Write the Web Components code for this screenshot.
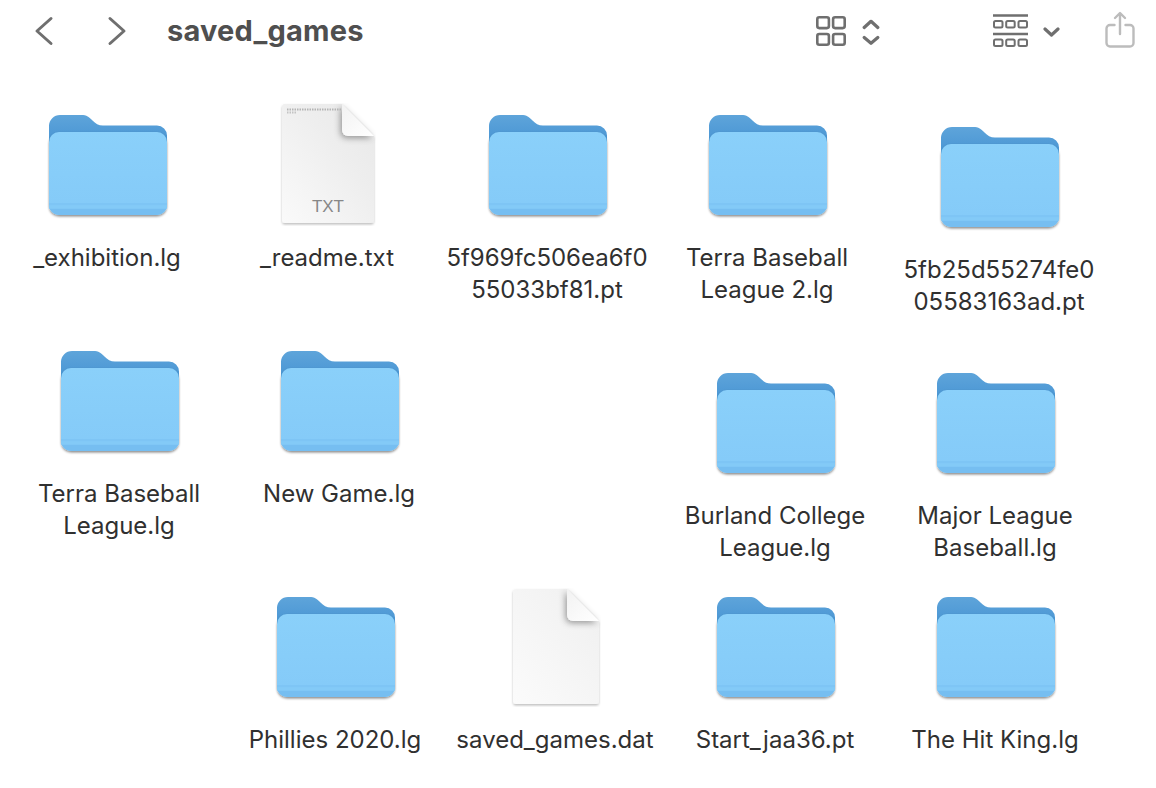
<!DOCTYPE html>
<html>
<head>
<meta charset="utf-8">
<title>saved_games</title>
<style>
    html, body { margin: 0; height: 100%; background: #fff; overflow: hidden; }
    body { font-family: Inter, "Liberation Sans", sans-serif; }
</style>
</head>
<body>
<finder-window>
    <finder-toolbar slot="toolbar" title="saved_games"></finder-toolbar>
    <file-item x="108" y="114"><folder-icon slot="icon"></folder-icon>_exhibition.lg</file-item>
    <file-item x="328" y="114"><doc-icon slot="icon" w="92" h="119" lift="11" badge="TXT"></doc-icon>_readme.txt</file-item>
    <file-item x="548" y="114"><folder-icon slot="icon"></folder-icon>5f969fc506ea6f0<br>55033bf81.pt</file-item>
    <file-item x="768" y="114"><folder-icon slot="icon"></folder-icon>Terra Baseball<br>League 2.lg</file-item>
    <file-item x="1000" y="126"><folder-icon slot="icon"></folder-icon>5fb25d55274fe0<br>05583163ad.pt</file-item>
    <file-item x="120" y="350"><folder-icon slot="icon"></folder-icon>Terra Baseball<br>League.lg</file-item>
    <file-item x="340" y="350"><folder-icon slot="icon"></folder-icon>New Game.lg</file-item>
    <file-item x="776" y="372"><folder-icon slot="icon"></folder-icon>Burland College<br>League.lg</file-item>
    <file-item x="996" y="372"><folder-icon slot="icon"></folder-icon>Major League<br>Baseball.lg</file-item>
    <file-item x="336" y="596"><folder-icon slot="icon"></folder-icon>Phillies 2020.lg</file-item>
    <file-item x="556" y="596"><doc-icon slot="icon" w="86" h="115" lift="8"></doc-icon>saved_games.dat</file-item>
    <file-item x="776" y="596"><folder-icon slot="icon"></folder-icon>Start_jaa36.pt</file-item>
    <file-item x="996" y="596"><folder-icon slot="icon"></folder-icon>The Hit King.lg</file-item>
</finder-window>

<script>
class FinderWindow extends HTMLElement {
    constructor() {
        super();
        this.attachShadow({ mode: 'open' });
        this.shadowRoot.innerHTML = `
            <style>
                :host { display: flex; flex-direction: column; width: 1156px; height: 788px; }
                .canvas { position: relative; flex: 1; }
            </style>
            <slot name="toolbar"></slot>
            <div class="canvas"><slot></slot></div>
        `;
    }
}

class FinderToolbar extends HTMLElement {
    constructor() {
        super();
        this.attachShadow({ mode: 'open' });
        this.shadowRoot.innerHTML = `
            <style>
                :host { display: flex; align-items: flex-start; height: 62px; flex: none; color: #6f6f6f; }
                svg { display: block; flex: none; fill: none; stroke: currentColor; stroke-linecap: round; stroke-linejoin: round; }
                .back { margin: 16px 0 0 33px; }
                .forward { margin: 16px 0 0 51px; }
                h1 {
                    margin: 10px 0 0 39px;
                    font: 700 29px/42px Inter, "Liberation Sans", sans-serif;
                    color: #4f4f4f;
                    letter-spacing: .2px;
                }
                .view { margin: 15px 0 0 auto; }
                .sort { margin: 18px 0 0 15px; }
                .group { margin: 13px 0 0 112px; }
                .group-arrow { margin: 27px 0 0 14px; }
                .share { margin: 11px 21px 0 45px; color: #bcbcbc; }
            </style>
            <svg class="back" width="22" height="30" viewBox="0 0 22 30" stroke-width="3"><path d="M18 2.5 4 15l14 12.500"/></svg>
            <svg class="forward" width="22" height="30" viewBox="0 0 22 30" stroke-width="3"><path d="M4 2.500 18 15 4 27.500"/></svg>
            <h1></h1>
            <svg class="view" width="32" height="32" viewBox="0 0 32 32" stroke-width="2.600">
                <rect x="2.300" y="2.300" width="11.600" height="10.800" rx="2"/>
                <rect x="18.100" y="2.300" width="11.600" height="10.800" rx="2"/>
                <rect x="2.300" y="19" width="11.600" height="10.800" rx="2"/>
                <rect x="18.100" y="19" width="11.600" height="10.800" rx="2"/>
            </svg>
            <svg class="sort" width="18" height="28" viewBox="0 0 18 28" stroke-width="3.200">
                <path d="M2.200 9.500 9 3.300l6.800 6.200M2.200 19.500 9 25.300l6.800-5.800"/>
            </svg>
            <svg class="group" width="37" height="36" viewBox="0 0 37 36" stroke-width="2">
                <path d="M1 2.500h35M1 21h35" stroke-width="2.400" stroke-linecap="butt"/>
                <rect x="2" y="8" width="8.500" height="6.500" rx="1.500"/>
                <rect x="14.200" y="8" width="8.500" height="6.500" rx="1.500"/>
                <rect x="26.500" y="8" width="8.500" height="6.500" rx="1.500"/>
                <rect x="2" y="26.500" width="8.500" height="6.500" rx="1.500"/>
                <rect x="14.200" y="26.500" width="8.500" height="6.500" rx="1.500"/>
                <rect x="26.500" y="26.500" width="8.500" height="6.500" rx="1.500"/>
            </svg>
            <svg class="group-arrow" width="17" height="10" viewBox="0 0 17 10" stroke-width="3.200"><path d="M2 2l6.500 6L15 2"/></svg>
            <svg class="share" width="30" height="38" viewBox="0 0 30 38" stroke-width="2.400">
                <path d="M9.500 14H5a3.500 3.500 0 0 0-3.500 3.500V32A3.500 3.500 0 0 0 5 35.500h20a3.500 3.500 0 0 0 3.500-3.500V17.500A3.500 3.500 0 0 0 25 14h-4.500"/>
                <path d="M15 2.500V23M10 7l5-5 5 5"/>
            </svg>
        `;
        this.shadowRoot.querySelector('h1').textContent = this.getAttribute('title');
    }
}

class FileItem extends HTMLElement {
    constructor() {
        super();
        this.attachShadow({ mode: 'open' });
        this.shadowRoot.innerHTML = `
            <style>
                :host {
                    position: absolute;
                    left: calc(var(--x) * 1px - 120px);
                    top: calc(var(--y) * 1px - 62px);
                    width: 240px;
                    display: flex;
                    flex-direction: column;
                    align-items: center;
                    text-align: center;
                    font: 400 24px/32px Inter, "Liberation Sans", sans-serif;
                    color: #303030;
                }
                .icon { height: 128px; }
                .label { padding-right: 2px; white-space: nowrap; }
            </style>
            <div class="icon"><slot name="icon"></slot></div>
            <div class="label"><slot></slot></div>
        `;
    }

    connectedCallback() {
        this.style.setProperty('--x', this.getAttribute('x'));
        this.style.setProperty('--y', this.getAttribute('y'));
    }
}

class FolderIcon extends HTMLElement {
    constructor() {
        super();
        this.attachShadow({ mode: 'open' });
        this.shadowRoot.innerHTML = `
            <style>
                :host { display: block; width: 122px; height: 106px; }
                svg { display: block; }
            </style>
            <svg width="122" height="106" viewBox="0 0 122 106">
                <defs>
                    <linearGradient id="back" x1="0" y1="0" x2="0" y2="1">
                        <stop offset="0" stop-color="#5ea4da"/>
                        <stop offset="1" stop-color="#3f8fd1"/>
                    </linearGradient>
                    <linearGradient id="front" x1="0" y1="0" x2="0" y2="1">
                        <stop offset="0" stop-color="#8ad0fa"/>
                        <stop offset="1" stop-color="#84caf8"/>
                    </linearGradient>
                    <filter id="shade" x="-5%" y="-5%" width="110%" height="115%">
                        <feDropShadow dx="0" dy="1.500" stdDeviation="1.300" flood-color="#000" flood-opacity=".45"/>
                    </filter>
                </defs>
                <path fill="url(#back)" d="M2 12A11 11 0 0 1 13 1H34c6 0 8 2 11.500 5.500 3 3 6 5 10.500 5H110a10 10 0 0 1 10 10V40H2z"/>
                <g filter="url(#shade)">
                    <rect x="2" y="18" width="118" height="83" rx="10" fill="url(#front)"/>
                </g>
                <path fill="#7ec5f5" d="M2 89h118v2.500H2z"/>
                <path fill="#76bef1" d="M2 94.500h118v-3.500V91a10 10 0 0 1-10 10H12A10 10 0 0 1 2 91z"/>
                <path fill="#83caf7" d="M2 91.500h118v3H2z"/>
            </svg>
        `;
    }
}

class DocIcon extends HTMLElement {
    constructor() {
        super();
        this.attachShadow({ mode: 'open' });
    }

    connectedCallback() {
        const w = Number(this.getAttribute('w'));
        const h = Number(this.getAttribute('h'));
        const lift = this.getAttribute('lift');
        const badge = this.getAttribute('badge');
        const fx = w - 32;
        const fy = 32;
        const light = badge ? ['#fafafa', '#eeeeee', '#e8e8e8'] : ['#fbfbfb', '#f4f4f4', '#efefef'];
        this.shadowRoot.innerHTML = `
            <style>
                :host { display: block; width: ${w + 4}px; height: ${h + 4}px; margin-top: -${lift}px; }
                svg { display: block; }
                text { font: 400 17px "Liberation Sans", Arial, sans-serif; fill: #878787; }
            </style>
            <svg width="${w + 4}" height="${h + 4}" viewBox="-2 -1 ${w + 4} ${h + 4}">
                <defs>
                    <linearGradient id="paper" x1="0" y1="1" x2="1" y2="0">
                        <stop offset="0" stop-color="${light[0]}"/>
                        <stop offset=".6" stop-color="${light[1]}"/>
                        <stop offset="1" stop-color="${light[2]}"/>
                    </linearGradient>
                    <linearGradient id="flap" x1="0" y1="0" x2="1" y2="1">
                        <stop offset="0" stop-color="#f2f2f2"/>
                        <stop offset="1" stop-color="#ffffff"/>
                    </linearGradient>
                    <filter id="lift" x="-5%" y="-5%" width="110%" height="110%">
                        <feDropShadow dx="0" dy="1.500" stdDeviation="1" flood-color="#000" flood-opacity=".25"/>
                    </filter>
                    <filter id="curl" x="-40%" y="-40%" width="180%" height="180%">
                        <feDropShadow dx="-1.500" dy="2" stdDeviation="3" flood-color="#000" flood-opacity=".38"/>
                    </filter>
                </defs>
                <path filter="url(#lift)" fill="url(#paper)" d="M3 0H${fx}L${w} ${fy}V${h - 3}a3 3 0 0 1-3 3H3a3 3 0 0 1-3-3V3a3 3 0 0 1 3-3z"/>
                <path filter="url(#curl)" fill="url(#flap)" d="M${fx} 0L${w} ${fy}H${fx + 6}a6 6 0 0 1-6-6z"/>
                ${badge ? `
                <path d="M5 5.500H${fx - 1}" stroke="#b4b4b4" stroke-width="2" stroke-dasharray="1.500 1"/>
                <path d="M5 8.500H15" stroke="#c4c4c4" stroke-width="2" stroke-dasharray="1.500 1"/>
                <text x="${w / 2}" y="${h - 11}" text-anchor="middle" textLength="32">${badge}</text>` : ''}
            </svg>
        `;
    }
}

customElements.define('finder-window', FinderWindow);
customElements.define('finder-toolbar', FinderToolbar);
customElements.define('file-item', FileItem);
customElements.define('folder-icon', FolderIcon);
customElements.define('doc-icon', DocIcon);
</script>
</body>
</html>
